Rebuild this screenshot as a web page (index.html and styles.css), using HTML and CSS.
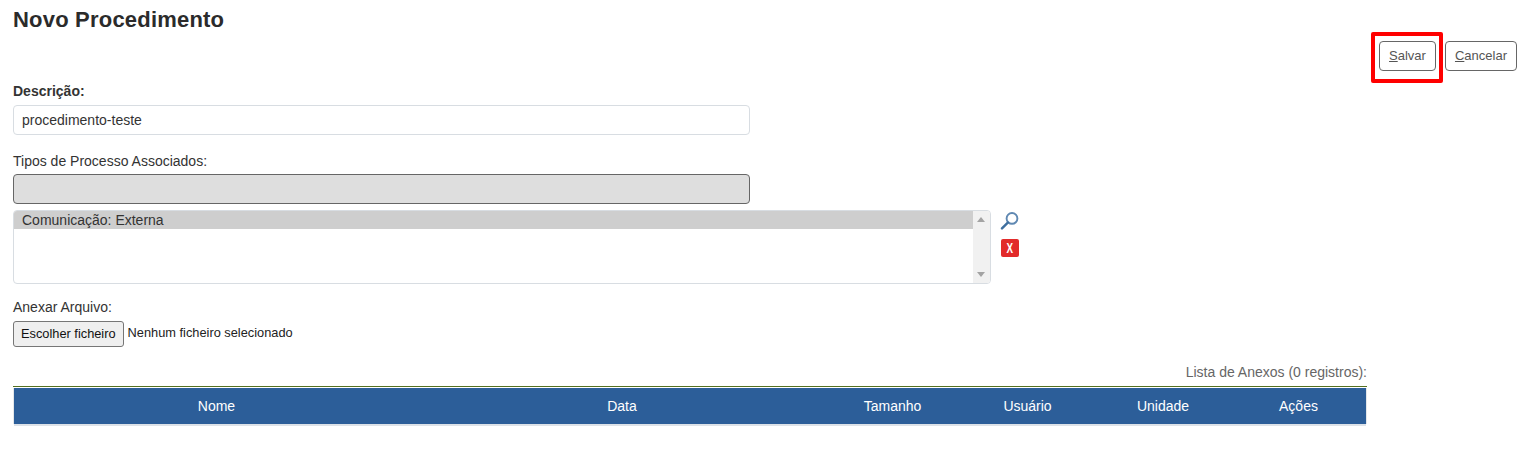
FILE: index.html
```html
<!DOCTYPE html>
<html lang="pt-BR">
<head>
  <meta charset="UTF-8">
  <title>Novo Procedimento</title>
  <link rel="stylesheet" href="styles.css">
</head>
<body>
  <div class="title">Novo Procedimento</div>
  <div class="bar">
    <span class="highlight"><button class="btn"><u>S</u>alvar</button></span>
    <button class="btn cancel"><u>C</u>ancelar</button>
  </div>
  <div class="main">
    <label class="lbl bold">Descrição:</label>
    <input class="field" type="text" value="procedimento-teste">
    <label class="lbl second">Tipos de Processo Associados:</label>
    <input class="field disabled" type="text" disabled>
    <div class="list-row">
      <div class="list">
        <div class="list-items"><div class="opt">Comunicação: Externa</div></div>
        <div class="scroll">
          <span class="arr up"></span>
          <span class="arr down"></span>
        </div>
      </div>
      <div class="tools">
        <svg class="lupa" viewBox="0 0 20 20" width="20" height="20">
          <circle cx="12" cy="8.4" r="5.4" fill="none" stroke="#5f88b2" stroke-width="1.9"/>
          <path d="M7.8 12.6 L2 18.4" stroke="#3f6f9f" stroke-width="2.4" stroke-linecap="round"/>
        </svg>
        <span class="del"><span class="del-x">X</span></span>
      </div>
    </div>
    <label class="lbl third">Anexar Arquivo:</label>
    <div class="file-row">
      <button class="file-btn">Escolher ficheiro</button>
      <span class="file-txt">Nenhum ficheiro selecionado</span>
    </div>
  </div>
  <div class="tbl-wrap">
    <div class="caption">Lista de Anexos (0 registros):</div>
    <div class="tbl-box">
      <table class="tbl">
        <tr>
          <th class="c1">Nome</th>
          <th class="c2">Data</th>
          <th class="c3">Tamanho</th>
          <th class="c4">Usuário</th>
          <th class="c5">Unidade</th>
          <th class="c6">Ações</th>
        </tr>
      </table>
    </div>
  </div>
</body>
</html>
```
FILE: styles.css
```css
* { box-sizing: border-box; }
body { margin: 0; padding: 0 8px 0 13px; font-family: "Liberation Sans", Arial, sans-serif; font-size: 14px; color: #333; background: #fff; height: 458px; overflow: hidden; }
.title { font-size: 22px; font-weight: 700; line-height: 24px; padding-top: 8px; height: 32px; color: #2b2b2b; letter-spacing: 0.2px; }
.bar { display: flex; justify-content: flex-end; align-items: flex-start; gap: 2px; height: 51px; }
.highlight { display: flex; align-items: flex-start; justify-content: center; width: 72px; height: 51px; padding: 5px 0 0 1px; border: 4px solid #f00; border-radius: 2px; }
.btn { height: 30px; padding: 0 9px 2px; background: #fff; border: 1px solid #666; border-radius: 4px; font: 13px "Liberation Sans", Arial, sans-serif; color: #555; }
.cancel { margin-top: 9px; }
.main { display: flex; flex-direction: column; align-items: flex-start; }
.lbl { font-size: 14px; line-height: 16px; color: #333; }
.bold { font-weight: 700; }
.field { width: 737px; height: 30px; margin-top: 6px; padding: 0 8px; border: 1px solid #d8dde2; border-radius: 4px; font: 14px "Liberation Sans", Arial, sans-serif; color: #333; }
.second { margin-top: 18px; }
.disabled { margin-top: 5px; background: #dedede; border-color: #666; }
.list-row { display: flex; gap: 10px; margin-top: 6px; }
.list { display: flex; width: 978px; height: 74px; border: 1px solid #d8dde2; border-radius: 4px; overflow: hidden; }
.list-items { flex: 1; }
.opt { background: #cecece; padding: 0 8px; height: 18px; line-height: 18px; font-size: 14px; color: #333; }
.scroll { position: relative; width: 17px; background: #f1f1f1; }
.arr { position: absolute; left: 4px; width: 0; height: 0; border-left: 4px solid transparent; border-right: 4px solid transparent; }
.up { top: 6px; border-bottom: 5px solid #a3a3a3; }
.down { bottom: 6px; border-top: 5px solid #a3a3a3; }
.tools { display: flex; flex-direction: column; align-items: flex-start; gap: 9px; }
.lupa { display: block; margin-left: -1px; }
.del { display: block; width: 18px; height: 18px; background: #e22a2a; border-radius: 2px; color: #fff; font-size: 14px; font-weight: 700; line-height: 18px; text-align: center; }
.del-x { display: inline-block; transform: scaleX(0.7); }
.third { margin-top: 15px; }
.file-row { display: flex; align-items: center; gap: 4px; margin-top: 6px; }
.file-btn { height: 26px; padding: 0 7px 2px; background: #efefef; border: 1px solid #767676; border-radius: 3px; font: 12.8px "Liberation Sans", Arial, sans-serif; color: #111; }
.file-txt { font-size: 12.8px; line-height: 24px; margin-bottom: 2px; color: #222; }
.tbl-wrap { width: 1354px; margin-top: 16px; }
.caption { text-align: right; font-size: 14px; line-height: 16px; padding-top: 1px; color: #666; height: 23px; }
.tbl-box { border-top: 1px solid #55701f; padding: 1px 1px 2px; background: #fff; }
.tbl { width: 100%; border-collapse: collapse; table-layout: fixed; box-shadow: 0 2px 0 #dde2e8, -1px 0 0 #e4e7ea, 1px 0 0 #e4e7ea; }
.tbl th { background: #2c5e99; color: #fff; font-weight: 400; font-size: 14px; height: 36px; padding: 0; }
.c1 { width: 405px; }
.c2 { width: 406px; }
.c3 { width: 135px; }
.c4 { width: 135px; }
.c5 { width: 136px; }
```
